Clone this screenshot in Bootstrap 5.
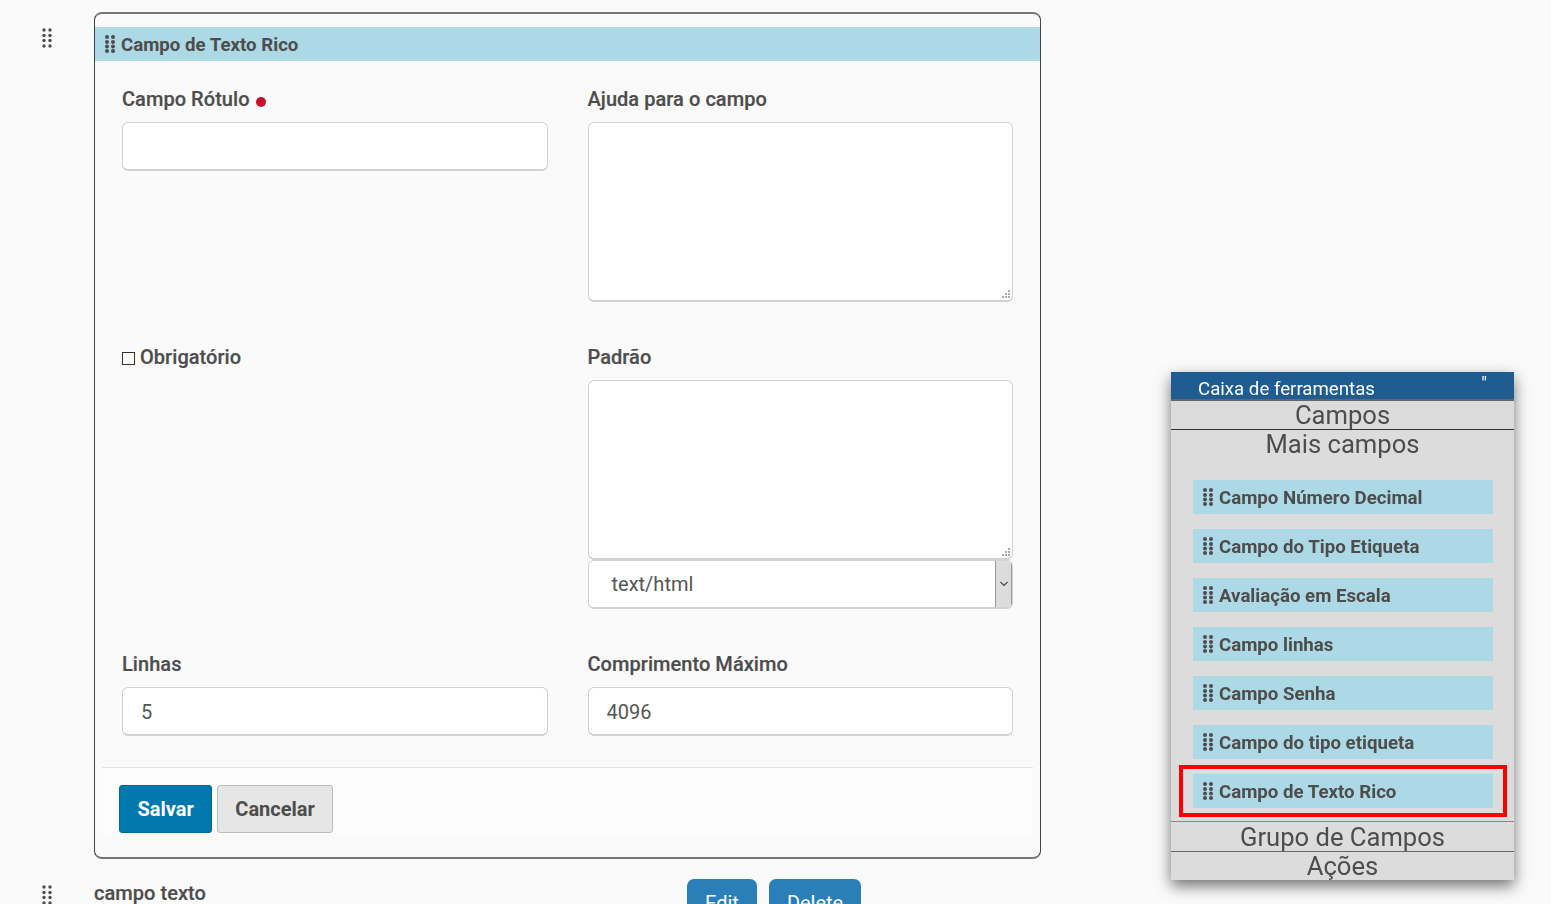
<!DOCTYPE html>
<html lang="pt-BR">
<head>
<meta charset="utf-8">
<title>Campo de Texto Rico</title>
<link href="https://cdn.jsdelivr.net/npm/bootstrap@5.3.0/dist/css/bootstrap.min.css" rel="stylesheet">
<style>
html,body{height:100%;overflow:hidden}
body{background:#fafafa;color:#4d4d4d;font-family:Roboto,"Liberation Sans",sans-serif;font-size:20px;padding:12px 0 0 41px}
.grip{display:block;fill:currentColor;flex:none}
.grip-label{padding-top:2px}
.handle-col{width:53px;flex:none;padding:16px 0 0 1px}
.handle-next{padding-top:6px}
.builder-card{width:947px;height:847px;border:1px solid #444;border-top:2px solid #777;border-bottom:2px solid #777;border-radius:8px;padding-top:13px;background:#fafafa}
.builder-head{height:34px;background:#add8e6;font-size:18.67px;font-weight:700;padding-left:10px;gap:6px}
.builder-body{padding:26px 27px 0}
.builder-body .row{--bs-gutter-x:40px}
.field-row{margin-bottom:43px}
.field-label{display:block;font-weight:500;line-height:24px;margin-bottom:11px;font-size:20px;-webkit-text-stroke:.2px currentColor;letter-spacing:.05px}
.req-dot{display:inline-block;width:10px;height:10px;border-radius:50%;background:#c8102e;margin-left:1px;vertical-align:-1px}
.builder-input{display:block;width:100%;height:49px;border:1px solid #d2d2d2;border-bottom-width:2px;border-radius:6px;background:#fff;padding:1px 18px 0;color:#555;font-size:20px;font-family:inherit;outline:0}
.builder-area{height:180px;resize:none;background:#fff url("data:image/svg+xml,%3Csvg xmlns='http://www.w3.org/2000/svg' width='8' height='8' fill='%23aaa'%3E%3Crect x='6' y='0' width='2' height='2'/%3E%3Crect x='3' y='3' width='2' height='2'/%3E%3Crect x='6' y='3' width='2' height='2'/%3E%3Crect x='0' y='6' width='2' height='2'/%3E%3Crect x='3' y='6' width='2' height='2'/%3E%3Crect x='6' y='6' width='2' height='2'/%3E%3C/svg%3E") no-repeat right 2px bottom 2px}
.type-select{height:49px;display:flex;align-items:center;border:1px solid #d2d2d2;border-bottom-width:2px;border-radius:6px;background:#fff;padding-left:23px;color:#555;overflow:hidden}
.select-arrow{width:17px;height:100%;background:#dcdcdc;border-left:1px solid #999;border-right:1px solid #999;display:flex;align-items:center;justify-content:center}
.check-box{display:inline-block;width:13px;height:13px;border:1px solid #333;background:#fff;margin-right:5px;vertical-align:-1px}
.builder-foot{margin:31px 7px 0;border-top:1px solid #e4e4e4;padding:17px 17px 0;background:#fcfcfc;height:67px}
.btn-save,.btn-cancel{height:48px;font-size:20px;font-weight:700;border-radius:3px;line-height:46px}
.btn-save{background:#0078ae;border:1px solid #006a9b;color:#fff;padding:0 17.5px}
.btn-cancel{background:#e6e6e6;border:1px solid #bdbdbd;color:#4d4d4d;margin-left:5px;padding:0 17px}
.next-row{margin-top:20px}
.next-title{width:593px;font-weight:500;line-height:24px;padding-top:2px;-webkit-text-stroke:.2px currentColor;letter-spacing:.05px}
.btn-edit{height:48px;background:#2a7fb8;color:#fff;border:0;border-radius:7px;font-size:20px;padding:0 18px;line-height:48px;margin-right:12px}
.toolbox{position:fixed;left:1171px;top:372px;width:343px;height:508px;background:#dcdcdc;box-shadow:0 6px 14px rgba(0,0,0,.55);color:#4d4d4d}
.tool-head{height:29px;background:#1f5c92;border-bottom:2px solid #666;color:#fff;padding:5px 27px 0 27px;font-size:18.67px;line-height:24px}
.tool-quote{font-size:18px;line-height:14px}
.tool-sec{font-size:25.6px;line-height:29px;text-align:center;height:29px}
.tool-line{border-bottom:1px solid #333;height:29px}
.tool-list{padding:21px 21px 0 22px;height:363px;border-bottom:1px solid #888}
.tool-item{position:relative;height:34px;background:#add8e6;font-size:18.67px;font-weight:700;padding-left:10px;gap:6px;margin-bottom:15px}
.tool-mark::after{content:"";position:absolute;left:-14px;right:-14px;top:-9px;bottom:-9px;border:4.5px solid #f00}
.tool-sec2{height:30px;border-bottom:1px solid #666;font-size:25.6px;line-height:31px;text-align:center}
.tool-sec3{height:27px;font-size:25.6px;line-height:29px;text-align:center}
</style>
</head>
<body>
<svg width="0" height="0" class="position-absolute">
<symbol id="grip-thin" viewBox="0 0 10 20"><circle cx="2" cy="2" r="1.7"/><circle cx="8" cy="2" r="1.7"/><circle cx="2" cy="7.500" r="1.7"/><circle cx="8" cy="7.500" r="1.7"/><circle cx="2" cy="12.500" r="1.7"/><circle cx="8" cy="12.500" r="1.7"/><circle cx="2" cy="18" r="1.7"/><circle cx="8" cy="18" r="1.7"/></symbol>
<symbol id="grip-bold" viewBox="0 0 10 18"><circle cx="2" cy="2" r="2"/><circle cx="8" cy="2" r="2"/><circle cx="2" cy="7" r="2"/><circle cx="8" cy="7" r="2"/><circle cx="2" cy="11.500" r="2"/><circle cx="8" cy="11.500" r="2"/><circle cx="2" cy="16" r="2"/><circle cx="8" cy="16" r="2"/></symbol>
</svg>

<div class="d-flex">
  <div class="handle-col"><svg class="grip" width="10" height="20"><use href="#grip-thin"/></svg></div>
  <div class="builder-card">
    <div class="builder-head d-flex align-items-center"><svg class="grip" width="10" height="18"><use href="#grip-bold"/></svg><span class="grip-label">Campo de Texto Rico</span></div>
    <div class="builder-body">
      <div class="row field-row">
        <div class="col-6"><label class="field-label">Campo Rótulo <span class="req-dot"></span></label><input class="builder-input" type="text"></div>
        <div class="col-6"><label class="field-label">Ajuda para o campo</label><textarea class="builder-input builder-area"></textarea></div>
      </div>
      <div class="row field-row">
        <div class="col-6"><label class="field-label"><span class="check-box"></span>Obrigatório</label></div>
        <div class="col-6"><label class="field-label">Padrão</label><textarea class="builder-input builder-area"></textarea>
          <div class="type-select"><span class="flex-grow-1">text/html</span><span class="select-arrow"><svg width="10" height="6" viewBox="0 0 10 6"><path d="M1.500 1l3.500 3.500L8.500 1" fill="none" stroke="#444" stroke-width="1.100"/></svg></span></div>
        </div>
      </div>
      <div class="row">
        <div class="col-6"><label class="field-label">Linhas</label><input class="builder-input" type="text" value="5"></div>
        <div class="col-6"><label class="field-label">Comprimento Máximo</label><input class="builder-input" type="text" value="4096"></div>
      </div>
    </div>
    <div class="builder-foot d-flex align-items-start">
      <button class="btn btn-save" type="button">Salvar</button>
      <button class="btn btn-cancel" type="button">Cancelar</button>
    </div>
  </div>
</div>

<div class="d-flex next-row">
  <div class="handle-col handle-next"><svg class="grip" width="10" height="20"><use href="#grip-thin"/></svg></div>
  <div class="next-title">campo texto</div>
  <button class="btn btn-edit" type="button">Edit</button>
  <button class="btn btn-edit" type="button">Delete</button>
</div>

<aside class="toolbox">
  <div class="tool-head d-flex justify-content-between"><span>Caixa de ferramentas</span><span class="tool-quote">"</span></div>
  <div class="tool-sec tool-line">Campos</div>
  <div class="tool-sec">Mais campos</div>
  <div class="tool-list">
    <div class="tool-item d-flex align-items-center"><svg class="grip" width="10" height="18"><use href="#grip-bold"/></svg><span class="grip-label">Campo Número Decimal</span></div>
    <div class="tool-item d-flex align-items-center"><svg class="grip" width="10" height="18"><use href="#grip-bold"/></svg><span class="grip-label">Campo do Tipo Etiqueta</span></div>
    <div class="tool-item d-flex align-items-center"><svg class="grip" width="10" height="18"><use href="#grip-bold"/></svg><span class="grip-label">Avaliação em Escala</span></div>
    <div class="tool-item d-flex align-items-center"><svg class="grip" width="10" height="18"><use href="#grip-bold"/></svg><span class="grip-label">Campo linhas</span></div>
    <div class="tool-item d-flex align-items-center"><svg class="grip" width="10" height="18"><use href="#grip-bold"/></svg><span class="grip-label">Campo Senha</span></div>
    <div class="tool-item d-flex align-items-center"><svg class="grip" width="10" height="18"><use href="#grip-bold"/></svg><span class="grip-label">Campo do tipo etiqueta</span></div>
    <div class="tool-item tool-mark d-flex align-items-center"><svg class="grip" width="10" height="18"><use href="#grip-bold"/></svg><span class="grip-label">Campo de Texto Rico</span></div>
  </div>
  <div class="tool-sec2">Grupo de Campos</div>
  <div class="tool-sec3">Ações</div>
</aside>
</body>
</html>
